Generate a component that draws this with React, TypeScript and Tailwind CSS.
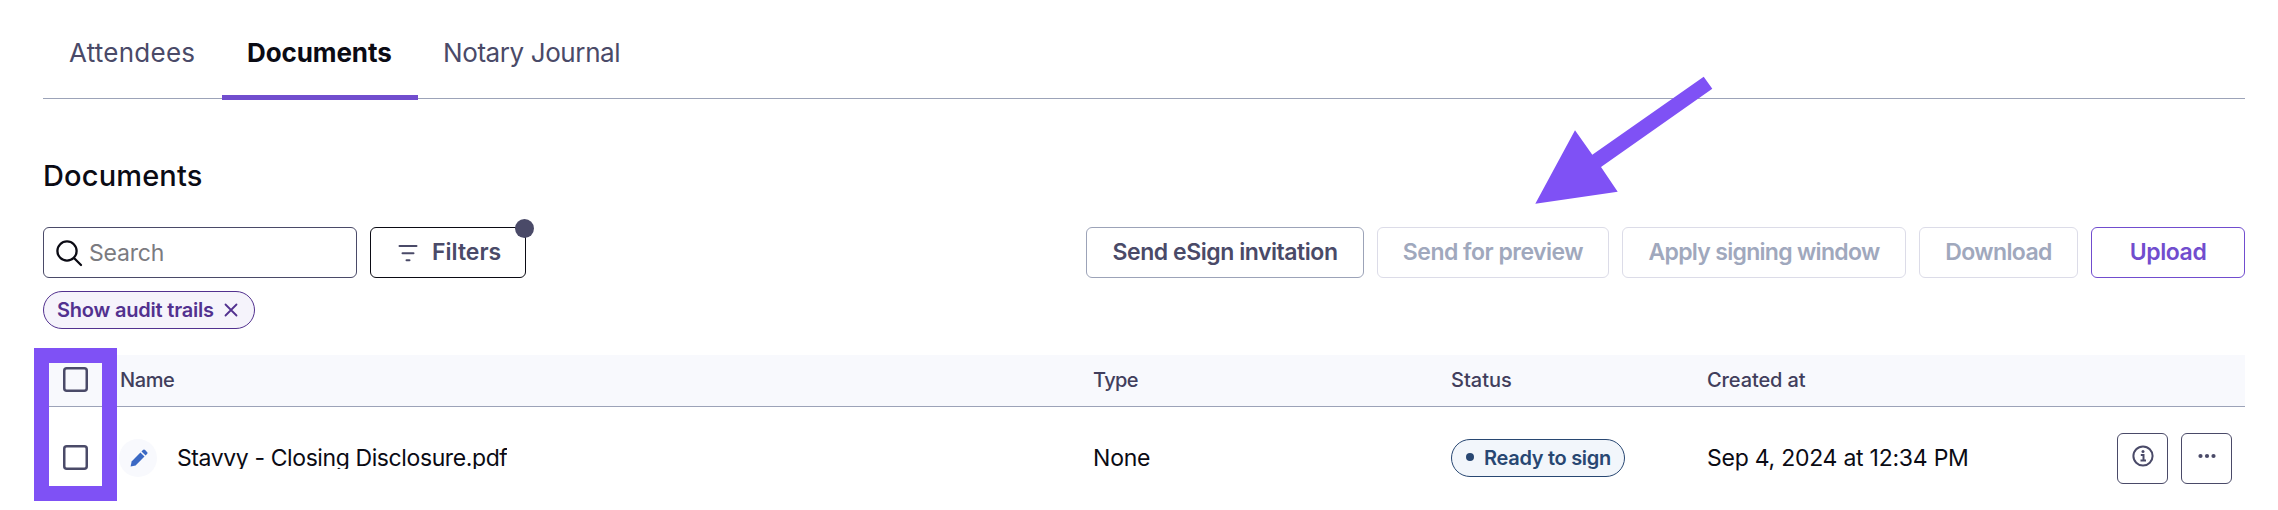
import React from 'react';

const tabs = [
  { label: 'Attendees', active: false, style: 'w-[179px] pl-[26px] text-[#4a4a68] tracking-[0.25px]' },
  { label: 'Documents', active: true, style: 'w-[196px] pl-[25px] font-bold text-[#0b0b14] tracking-[-0.1px]' },
  { label: 'Notary Journal', active: false, style: 'w-[228px] pl-[25px] text-[#4a4a68] tracking-[-0.4px]' },
];

const actions = [
  { label: 'Send eSign invitation', style: 'w-[278px] border-[#9ca3b8] text-[#4a4a68] tracking-[-0.45px]' },
  { label: 'Send for preview', style: 'w-[232px] border-[#dcdce8] text-[#a0a8bd] tracking-[-0.5px]' },
  { label: 'Apply signing window', style: 'w-[284px] border-[#dcdce8] text-[#a0a8bd] tracking-[-0.7px]' },
  { label: 'Download', style: 'w-[159px] border-[#dcdce8] text-[#a0a8bd] tracking-[-0.6px]' },
  { label: 'Upload', style: 'w-[154px] border-[#714dce] text-[#714dce] tracking-[-0.4px]' },
];

const columns = 'grid grid-cols-[76px_974px_358px_256px_1fr] items-center';

const Checkbox = () => (
  <svg className="mb-0.5 ml-5" width="25" height="25" viewBox="0 0 25 25" fill="none" stroke="#4a4a68" strokeWidth="2.5">
    <rect x="1.250" y="1.250" width="22.500" height="22.500" rx="2.500" />
  </svg>
);

const SearchIcon = () => (
  <svg width="28" height="28" viewBox="0 0 28 28" fill="none" stroke="#0b0b14" strokeWidth="2.3" strokeLinecap="round">
    <circle cx="12" cy="12" r="9.600" />
    <path d="M19 19l7 7" />
  </svg>
);

const FilterIcon = () => (
  <svg width="20" height="18" viewBox="0 0 20 18" fill="none" stroke="#4a4a68" strokeWidth="2" strokeLinecap="round">
    <path d="M1.500 2h17M4.500 9.200h11M8.500 16.200h3" />
  </svg>
);

const PencilIcon = () => (
  <svg width="18" height="18" viewBox="0 0 18 18" fill="#3b69c4">
    <path d="M.6 17.400l1-5L10.400 3.500l4.100 4.100-8.900 8.800z" />
    <path d="M11.500 2.400l1.400-1.400q1.100-1 2.200 0l1.900 1.900q1.100 1.100 0 2.200l-1.400 1.400z" />
  </svg>
);

const InfoIcon = () => (
  <svg width="22" height="22" viewBox="0 0 22 22" fill="none" stroke="#4a4a68" strokeWidth="2">
    <circle cx="11" cy="11" r="9.600" />
    <path d="M8.800 10h2.700v5.500M8.500 15.500h5.500" />
    <circle cx="11" cy="6.600" r="1.500" fill="#4a4a68" stroke="none" />
  </svg>
);

const MoreIcon = () => (
  <svg width="18" height="6" viewBox="0 0 18 6" fill="#4a4a68">
    <circle cx="2.500" cy="3" r="2.100" />
    <circle cx="9" cy="3" r="2.100" />
    <circle cx="15.500" cy="3" r="2.100" />
  </svg>
);

const App = () => {
  return (
    <div className="relative h-[510px] w-[2278px] overflow-hidden bg-white pr-[33px] pl-[43px] font-['Inter','Liberation_Sans',sans-serif] text-[#0b0b14]">
      <nav className="flex h-[100px] items-end">
        <div className="mb-px flex h-[99px] w-full border-b border-[#9ca3b8]">
          {tabs.map((tab) => (
            <button
              key={tab.label}
              className={`flex h-[100px] flex-col justify-between text-left text-[26px] whitespace-nowrap ${tab.style}`}
            >
              <span className="pt-8 leading-[42px]">{tab.label}</span>
              {tab.active && <span className="-ml-[25px] block h-[5px] w-[196px] shrink-0 bg-[#714dce]" />}
            </button>
          ))}
        </div>
      </nav>

      <h1 className="mt-14 text-[29px] leading-10 font-medium tracking-[0.15px]">Documents</h1>

      <div className="mt-[31px] flex h-[51px] items-center justify-between">
        <div className="flex gap-[13px]">
          <div className="flex h-[51px] w-[314px] items-center rounded-[6px] border border-[#4a4a68] pl-[11px] text-[23px] tracking-[-0.2px] text-[#7b7b80]">
            <SearchIcon />
            <span className="ml-1.5 pt-px">Search</span>
          </div>
          <button className="relative flex h-[51px] w-[156px] items-center rounded-[6px] border border-[#0b0b14] pl-[27px] text-[23px] font-semibold text-[#4a4a68]">
            <FilterIcon />
            <span className="ml-[14px]">Filters</span>
            <span className="absolute -top-[9px] -right-[9px] h-[19px] w-[19px] rounded-full bg-[#4a4a68]" />
          </button>
        </div>
        <div className="flex gap-[13px]">
          {actions.map((action) => (
            <button
              key={action.label}
              className={`flex h-[51px] items-center justify-center rounded-[6px] border text-[23px] font-semibold whitespace-nowrap ${action.style}`}
            >
              {action.label}
            </button>
          ))}
        </div>
      </div>

      <div className="mt-[13px] flex h-[38px] w-[212px] items-center rounded-full border border-[#52318f] bg-[#f5f3fb] pb-px pl-[13px] text-[20px] font-semibold tracking-[-0.2px] whitespace-nowrap text-[#52318f]">
        Show audit trails
        <svg className="ml-[10px]" width="14" height="14" viewBox="0 0 14 14" stroke="#52318f" strokeWidth="1.8" strokeLinecap="round">
          <path d="M1.500 1.500l11 11M12.500 1.500l-11 11" />
        </svg>
      </div>

      <div className="mt-[26px]">
        <div className={`h-[52px] border-b border-[#9ca3b8] bg-[#f8f9fd] pb-px text-[20px] font-medium text-[#413e5c] ${columns}`}>
          <Checkbox />
          <span className="pl-[1px] tracking-[-0.4px]">Name</span>
          <span className="tracking-[-0.6px]">Type</span>
          <span>Status</span>
          <span className="tracking-[-0.1px]">Created at</span>
        </div>
        <div className={`h-[102px] text-[23px] ${columns}`}>
          <Checkbox />
          <div className="flex items-center">
            <span className="flex h-[38px] w-[38px] items-center justify-center rounded-full bg-[#f8f9fd] pb-px pl-0.5">
              <PencilIcon />
            </span>
            <span className="mb-0.5 ml-5 h-[23px] overflow-hidden leading-[25px] tracking-[-0.4px]">Stavvy - Closing Disclosure.pdf</span>
          </div>
          <span className="tracking-[-0.2px]">None</span>
          <span className="flex h-[38px] w-[174px] items-center rounded-full border border-[#284772] bg-[#f2f6fb] pl-[14px] text-[20px] font-semibold tracking-[-0.3px] whitespace-nowrap text-[#284772]">
            <span className="mr-[10px] mb-0.5 h-2 w-2 rounded-full bg-[#284772]" />
            Ready to sign
          </span>
          <div className="flex items-center justify-between pr-[13px]">
            <span className="tracking-[-0.25px] whitespace-nowrap">Sep 4, 2024 at 12:34 PM</span>
            <div className="flex gap-[13px]">
              <button className="flex h-[51px] w-[51px] items-center justify-center rounded-[6px] border border-[#4a4a68] pb-1">
                <InfoIcon />
              </button>
              <button className="flex h-[51px] w-[51px] items-center justify-center rounded-[6px] border border-[#4a4a68] pb-1">
                <MoreIcon />
              </button>
            </div>
          </div>
        </div>
      </div>

      {/* callouts drawn over the page */}
      <div className="absolute top-[348px] left-[34px] h-[153px] w-[83px] border-[15px] border-[#7f51f5]" />
      <svg className="absolute top-[70px] left-[1530px]" width="190" height="140" viewBox="1530 70 190 140" fill="#7f51f5">
        <polygon points="1535.300,203.800 1575,130.300 1592.300,154.700 1703.700,76.700 1712.300,88.700 1601,167 1617.700,191.700" />
      </svg>
    </div>
  );
};

export default App;
